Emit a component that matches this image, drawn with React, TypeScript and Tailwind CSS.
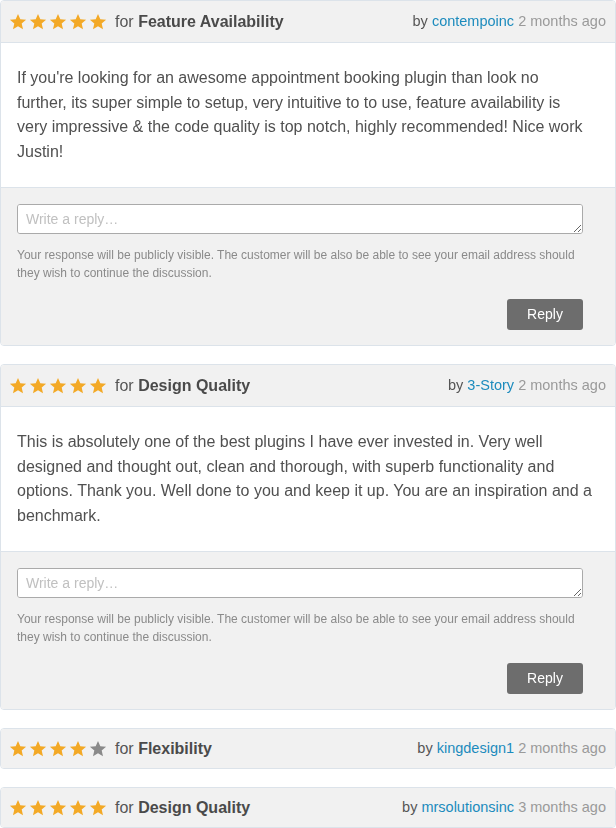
import React from 'react';

type Review = {
    rating: number;
    topic: string;
    author: string;
    when: string;
    body?: string;
    bodyClass?: string;
};

const reviews: Review[] = [
    {
        rating: 5,
        topic: 'Feature Availability',
        author: 'contempoinc',
        when: '2 months ago',
        body: "If you're looking for an awesome appointment booking plugin than look no further, its super simple to setup, very intuitive to to use, feature availability is very impressive & the code quality is top notch, highly recommended! Nice work Justin!",
        bodyClass: 'pr-[26px]',
    },
    {
        rating: 5,
        topic: 'Design Quality',
        author: '3-Story',
        when: '2 months ago',
        body: 'This is absolutely one of the best plugins I have ever invested in. Very well designed and thought out, clean and thorough, with superb functionality and options. Thank you. Well done to you and keep it up. You are an inspiration and a benchmark.',
        bodyClass: 'pr-[16px]',
    },
    { rating: 4, topic: 'Flexibility', author: 'kingdesign1', when: '2 months ago' },
    { rating: 5, topic: 'Design Quality', author: 'mrsolutionsinc', when: '3 months ago' },
];

function Star({ on }: { on: boolean }) {
    return (
        <svg width="18" height="18" viewBox="0 0 24 24" className={on ? 'text-[#f3a926]' : 'text-[#8a8a8a]'}>
            <path
                fill="currentColor"
                d="M12 1.2l3.1 7.1 7.7.6-5.9 5 1.8 7.6L12 17.5l-6.7 4 1.8-7.6-5.9-5 7.7-.6z"
            />
        </svg>
    );
}

function ReviewCard({ review }: { review: Review }) {
    return (
        <div className="border border-[#dce3ea] rounded-[4px] overflow-hidden">
            <div
                className={`${review.body ? 'h-[41px]' : 'h-[39px]'} bg-[#f1f1f1] flex items-center justify-between pl-[8px] pr-[9px]`}
            >
                <div className="flex items-center">
                    <div className="flex gap-[2px]">
                        {[1, 2, 3, 4, 5].map((n) => (
                            <Star key={n} on={n <= review.rating} />
                        ))}
                    </div>
                    <span className="ml-[8px] text-[16px] text-[#555]">
                        for <b className="text-[#4a4a4a]">{review.topic}</b>
                    </span>
                </div>
                <div className="text-[14.5px] text-[#555]">
                    by <a className="text-[#1c8bbd]">{review.author}</a>{' '}
                    <span className="text-[#9a9a9a]">{review.when}</span>
                </div>
            </div>
            {review.body && (
                <>
                    <div
                        className={`bg-white border-t border-[#dce3ea] pl-[16px] py-[23px] text-[16px] leading-[24.5px] text-[#505050] ${review.bodyClass}`}
                    >
                        {review.body}
                    </div>
                    <div className="bg-[#f1f1f1] border-t border-[#dce3ea] pl-[16px] pr-[32px] pt-[16px] pb-[15px]">
                        <textarea
                            rows={1}
                            placeholder="Write a reply…"
                            className="block w-full h-[30px] border border-[#aaaaaa] rounded-[3px] bg-white px-[8px] py-[4px] text-[14px] placeholder:text-[#c0c0c0] outline-none"
                        />
                        <p className="mt-[12px] text-[12px] leading-[18px] text-[#8a8a8a]">
                            Your response will be publicly visible. The customer will be also be able to see your email address should they wish to continue the discussion.
                        </p>
                        <div className="flex justify-end mt-[17px]">
                            <button className="w-[76px] h-[31px] bg-[#6d6d6d] text-white text-[14px] rounded-[3px]">
                                Reply
                            </button>
                        </div>
                    </div>
                </>
            )}
        </div>
    );
}

export default function App() {
    return (
        <div className="w-[616px] bg-white flex flex-col gap-[18px] font-['Liberation_Sans',Arial,sans-serif]">
            {reviews.map((r, i) => (
                <ReviewCard key={i} review={r} />
            ))}
        </div>
    );
}
